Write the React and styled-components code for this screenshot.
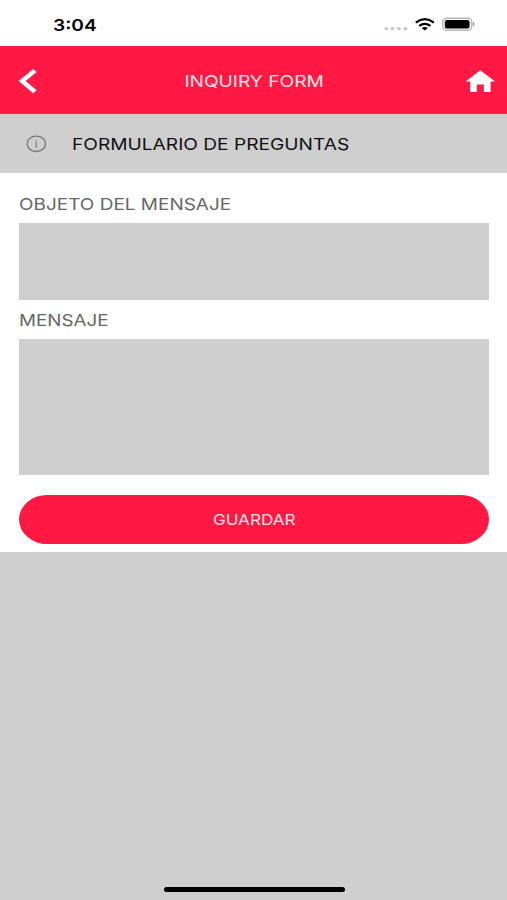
import styled, { createGlobalStyle } from "styled-components";

const theme = {
  red: "#ff1943",
  grey: "#cecece",
  font: `Inter, "Liberation Sans", sans-serif`,
};

const StatusIcons = () => (
  <svg width="94" height="18" viewBox="382 15 94 18">
    <g fill="#c8c8c8">
      <ellipse cx="386.3" cy="28.7" rx="2" ry="1.6" />
      <ellipse cx="392.3" cy="28.7" rx="2" ry="1.6" />
      <ellipse cx="398.8" cy="28.7" rx="2" ry="1.6" />
      <ellipse cx="405.3" cy="28.7" rx="2" ry="1.6" />
    </g>
    <g fill="none" stroke="#000" strokeWidth="2.2">
      <path d="M415.8 22.6 Q424.8 15.8 433.8 22.6" />
      <path d="M419.2 25.9 Q424.8 21.7 430.4 25.9" />
    </g>
    <path d="M421.6 28 Q424.8 25.8 428 28 L424.8 30.4 Z" />
    <rect x="442.8" y="18.2" width="29" height="12" rx="4" fill="#fff" stroke="#b4b4b4" strokeWidth="1.5" />
    <rect x="444.8" y="20" width="24.8" height="8.6" rx="2.2" />
    <path d="M473 21.8 Q476 24.2 473 26.6 Z" fill="#999" />
  </svg>
);

const BackIcon = () => (
  <svg width="20" height="26" viewBox="18 68 20 26">
    <path d="M33.2 69 L36.6 71.9 L25.6 81.1 L36.6 90.3 L33.2 93.2 L18.6 81.1 Z" fill="#fff" />
  </svg>
);

const HomeIcon = () => (
  <svg width="30" height="24" viewBox="465 68 30 24">
    <path d="M480.2 69.2 L495 80.6 H490.6 V91 H483.8 V83.5 H476.8 V91 H470.2 V80.6 H465.6 Z" fill="#fff" />
  </svg>
);

const InfoIcon = () => (
  <svg width="20" height="18" viewBox="26 135 20 18">
    <ellipse cx="36.3" cy="143.8" rx="9.2" ry="7.7" fill="none" stroke="#777" strokeWidth="1.3" />
    <path d="M36.3 142.3 V147.4 M36.3 139.9 V141.2" stroke="#777" strokeWidth="1.3" />
  </svg>
);

function App() {
  return (
    <Screen>
      <GlobalStyle />
      <StatusBar>
        <Text $size={16.5} $weight={600} $stretch={1.16}>
          3:04
        </Text>
        <StatusIcons />
      </StatusBar>
      <Header>
        <IconButton aria-label="Back">
          <BackIcon />
        </IconButton>
        <Title>
          <Text $size={16.5} $origin="center" $stretch={1.16} $color="#ffe3e8">
            INQUIRY FORM
          </Text>
        </Title>
        <IconButton aria-label="Home">
          <HomeIcon />
        </IconButton>
      </Header>
      <InfoBar>
        <InfoIcon />
        <Text $size={16.5} $stretch={1.16} $color="#111">
          FORMULARIO DE PREGUNTAS
        </Text>
      </InfoBar>
      <Form>
        <Label>
          <Text $size={16.5} $stretch={1.15} $color="#666">
            OBJETO DEL MENSAJE
          </Text>
        </Label>
        <Field $height={77} aria-label="Objeto del mensaje" />
        <Label>
          <Text $size={16.5} $stretch={1.14} $color="#666">
            MENSAJE
          </Text>
        </Label>
        <Field $height={136} aria-label="Mensaje" />
        <SaveButton>
          <Text $size={15} $origin="center" $stretch={1.14} $color="#ffe3e8">
            GUARDAR
          </Text>
        </SaveButton>
      </Form>
      <Footer>
        <HomeIndicator />
      </Footer>
    </Screen>
  );
}

const GlobalStyle = createGlobalStyle`
  * {
    box-sizing: border-box;
  }
  body {
    margin: 0;
    overflow: hidden;
  }
`;
const Screen = styled.div`
  display: flex;
  flex-direction: column;
  width: 507px;
  height: 900px;
  background: ${theme.grey};
  font-family: ${theme.font};
`;
// The letters are wider than the font's own, so they are stretched sideways.
const Text = styled.span`
  display: inline-block;
  font-size: ${(p) => p.$size}px;
  font-weight: ${(p) => p.$weight || 400};
  line-height: 20px;
  color: ${(p) => p.$color || "#000"};
  white-space: nowrap;
  transform: scaleX(${(p) => p.$stretch});
  transform-origin: ${(p) => p.$origin || "left"};
`;
const StatusBar = styled.div`
  display: flex;
  flex: none;
  justify-content: space-between;
  height: 46px;
  padding: 15px 31px 0 53px;
  background: #fff;
`;
const Header = styled.header`
  display: flex;
  flex: none;
  align-items: center;
  height: 68px;
  padding: 2px 12px 0 18px;
  background: ${theme.red};
`;
const IconButton = styled.button`
  display: flex;
  flex: none;
  padding: 0;
  border: 0;
  background: none;
`;
const Title = styled.h1`
  flex: 1;
  margin: 0;
  padding-left: 5px;
  font-size: 16px;
  line-height: 20px;
  text-align: center;
`;
const InfoBar = styled.div`
  display: flex;
  flex: none;
  align-items: center;
  gap: 26px;
  height: 59px;
  padding: 1px 0 0 26px;
`;
const Form = styled.form`
  display: flex;
  flex: none;
  flex-direction: column;
  height: 379px;
  padding: 10px 18px 0 19px;
  background: #fff;
`;
const Label = styled.label`
  display: flex;
  align-items: center;
  height: 39.5px;
  padding-top: 2px;
`;
const Field = styled.textarea`
  display: block;
  width: 100%;
  height: ${(p) => p.$height}px;
  border: 0;
  border-radius: 0;
  background: ${theme.grey};
  resize: none;
`;
const SaveButton = styled.button`
  display: flex;
  align-items: center;
  justify-content: center;
  height: 49px;
  margin: 19.5px 0 0;
  padding: 1px 0 0;
  border: 0;
  border-radius: 28px / 24.5px;
  background: ${theme.red};
  font-family: inherit;
`;
const Footer = styled.footer`
  display: flex;
  flex: 1;
  align-items: flex-end;
  justify-content: center;
  padding: 0 0 8px 1px;
`;
const HomeIndicator = styled.div`
  width: 181px;
  height: 5px;
  border-radius: 3px;
  background: #000;
`;

export default App;
